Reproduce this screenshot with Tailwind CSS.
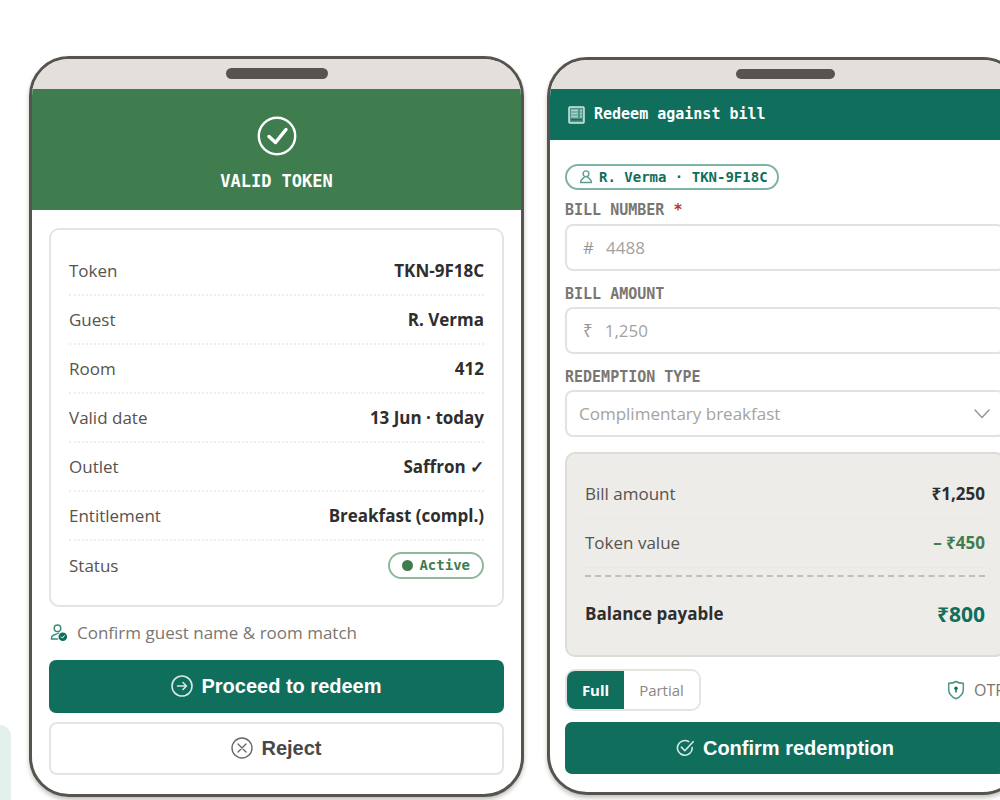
<!DOCTYPE html>
<html lang="en">
<head>
    <meta charset="UTF-8">
    <meta name="viewport" content="width=device-width, initial-scale=1.0">
    <title>Token redemption</title>
    <script src="https://cdn.jsdelivr.net/npm/@tailwindcss/browser@4"></script>
</head>
<body class="bg-white overflow-x-hidden font-['Open_Sans','Noto_Sans',sans-serif] text-[17px] text-[#57534e]">
    <main class="flex items-start min-h-screen overflow-hidden">
        <aside class="w-[11px] h-[75px] shrink-0 self-end rounded-tr-[12px] bg-[#e3f0ec]"></aside>

        <!-- Token check -->
        <section class="w-[49.5%] shrink-0 mt-14 ml-[18px] rounded-[40px] border-3 border-[#57534e] bg-white overflow-hidden shadow-[0_3px_4px_rgba(60,55,45,0.3)]">
            <div class="h-[30px] pt-[9px] bg-[#e3e0db]">
                <div class="w-[102px] h-[11px] mx-auto rounded-full bg-[#57534e]"></div>
            </div>
            <header class="h-[121px] pt-[27px] flex flex-col items-center gap-[13px] bg-[#3f7d4f] text-white">
                <svg class="w-10 h-10" viewBox="0 0 40 40" fill="none" stroke="currentColor" stroke-linecap="round" stroke-linejoin="round">
                    <circle cx="20" cy="20" r="18.2" stroke-width="2.4"/>
                    <path d="M12 20.5l6.500 6L29 13.500" stroke-width="3.500"/>
                </svg>
                <h1 class="font-['DejaVu_Sans_Mono',monospace] font-bold text-[17px] leading-6">VALID TOKEN</h1>
            </header>

            <div class="px-[17px] pt-[18px] pb-[19px]">
                <dl class="rounded-[10px] border-2 border-[#e6e4e1] px-[18px] pt-[17px] pb-[15px]">
                    <div class="h-[49px] flex items-center justify-between border-b-2 border-dotted border-[#efeeea]">
                        <dt>Token</dt>
                        <dd class="font-bold text-[#2e2e2e]">TKN-9F18C</dd>
                    </div>
                    <div class="h-[49px] flex items-center justify-between border-b-2 border-dotted border-[#efeeea]">
                        <dt>Guest</dt>
                        <dd class="font-bold text-[#2e2e2e]">R. Verma</dd>
                    </div>
                    <div class="h-[49px] flex items-center justify-between border-b-2 border-dotted border-[#efeeea]">
                        <dt>Room</dt>
                        <dd class="font-bold text-[#2e2e2e]">412</dd>
                    </div>
                    <div class="h-[49px] flex items-center justify-between border-b-2 border-dotted border-[#efeeea]">
                        <dt>Valid date</dt>
                        <dd class="font-bold text-[#2e2e2e]">13 Jun · today</dd>
                    </div>
                    <div class="h-[49px] flex items-center justify-between border-b-2 border-dotted border-[#efeeea]">
                        <dt>Outlet</dt>
                        <dd class="font-bold text-[#2e2e2e]">Saffron ✓</dd>
                    </div>
                    <div class="h-[49px] flex items-center justify-between border-b-2 border-dotted border-[#efeeea]">
                        <dt>Entitlement</dt>
                        <dd class="font-bold text-[#2e2e2e]">Breakfast (compl.)</dd>
                    </div>
                    <div class="h-[49px] flex items-center justify-between">
                        <dt>Status</dt>
                        <dd class="h-[27px] px-3 flex items-center gap-[6px] rounded-full border-2 border-[#8fb89a] font-['DejaVu_Sans_Mono',monospace] font-bold text-[14px] text-[#3f7d4f]">
                            <span class="w-[11px] h-[11px] rounded-full bg-[#3f7d4f]"></span>Active
                        </dd>
                    </div>
                </dl>

                <p class="flex items-center gap-[9px] h-[26px] mt-[13px] mb-[14px] text-[#7a7672]">
                    <svg class="w-[18px] h-[18px] ml-px" viewBox="0 0 18 18" fill="none" stroke="#3c8b7b" stroke-width="1.500" stroke-linecap="round">
                        <circle cx="7.5" cy="4.2" r="3.300"/>
                        <path d="M7.500 15H1.500c-.3-1.700.3-2.800 1.500-3.600C4.500 10.300 6.500 10.500 8.500 9"/>
                        <circle cx="12.800" cy="12.800" r="4.300" fill="#0f6e5c" stroke="none"/>
                        <path d="M11.200 12.900l1.200 1.200 2-2.500" stroke="#fff" stroke-width="1"/>
                    </svg>
                    Confirm guest name &amp; room match
                </p>

                <button type="button" class="w-full h-[53px] pb-[2px] flex items-center justify-center gap-2 rounded-[7px] bg-[#0f6e5c] text-white font-['Liberation_Sans',Arial,sans-serif] font-bold text-xl">
                    <svg class="w-[22px] h-[22px]" viewBox="0 0 22 22" fill="none" stroke="#d5e8e3" stroke-width="1.600" stroke-linecap="round" stroke-linejoin="round">
                        <circle cx="11" cy="11" r="10"/>
                        <path d="M6.500 11h9M12 7.500l3.500 3.500-3.500 3.500"/>
                    </svg>
                    Proceed to redeem
                </button>
                <button type="button" class="w-full h-[53px] pb-[2px] mt-[9px] flex items-center justify-center gap-2 rounded-[8px] border-2 border-[#e6e4e1] bg-white text-[#4a4846] font-['Liberation_Sans',Arial,sans-serif] font-bold text-xl">
                    <svg class="w-[22px] h-[22px]" viewBox="0 0 22 22" fill="none" stroke="#6b6865" stroke-width="1.400" stroke-linecap="round">
                        <circle cx="11" cy="11" r="10"/>
                        <path d="M7 7l8 8M15 7l-8 8"/>
                    </svg>
                    Reject
                </button>
            </div>
        </section>

        <!-- Bill redemption -->
        <section class="w-[47.6%] shrink-0 mt-[57px] ml-[23px] rounded-[40px] border-3 border-[#57534e] bg-white overflow-hidden shadow-[0_3px_4px_rgba(60,55,45,0.3)]">
            <div class="h-[29px] pt-[9px] bg-[#e3e0db]">
                <div class="w-[99px] h-[10px] mx-auto rounded-full bg-[#57534e]"></div>
            </div>
            <header class="h-[51px] px-[18px] flex items-center gap-[9px] bg-[#0f6e5c] text-white">
                <svg class="w-[17px] h-[18px]" viewBox="0 0 17 18" fill="none" stroke="#d5e8e3" stroke-width="1.500">
                    <rect x="1" y="1" width="15" height="16" rx="1" fill="#4d9586"/>
                    <path d="M3 4.500h7M3 7.500h7M3 10.500h7M12 4.500h2M12 7.500h2M12 10.500h2" stroke="#a9cfc6" stroke-width="1.800"/>
                    <path d="M3 13.800h11" stroke="#0f6e5c"/>
                </svg>
                <h2 class="font-['DejaVu_Sans_Mono',monospace] font-bold text-[15px]">Redeem against bill</h2>
            </header>

            <form class="px-[15px] pt-6 pb-[18px]">
                <div class="inline-flex items-center gap-[6px] h-[26px] pl-3 pr-[9px] rounded-full border-2 border-[#7fb3a7] align-top font-['DejaVu_Sans_Mono',monospace] font-bold text-[14px] text-[#0f6e5c]">
                    <svg class="w-[14px] h-[14px]" viewBox="0 0 14 14" fill="none" stroke="#5d9e90" stroke-width="1.400" stroke-linejoin="round">
                        <circle cx="7" cy="3.800" r="2.900"/>
                        <path d="M5.500 6.500c0 2-4 1.800-4 6h11c0-4.200-4-4-4-6"/>
                    </svg>
                    R. Verma · TKN-9F18C
                </div>

                <label for="bill-number" class="block mt-[10px] mb-1 font-['DejaVu_Sans_Mono',monospace] font-bold text-[15px] leading-5 text-[#7a7672]">BILL NUMBER <span class="text-[#b03a2e]">*</span></label>
                <div class="h-[47px] px-4 flex items-center gap-3 rounded-[8px] border-2 border-[#e3e2df] text-[#9a9794]">
                    <span>#</span>
                    <input id="bill-number" type="text" placeholder="4488" class="flex-1 min-w-0 outline-none placeholder:text-[#a5a3a0]">
                </div>

                <label for="bill-amount" class="block mt-[13px] mb-[3px] font-['DejaVu_Sans_Mono',monospace] font-bold text-[15px] leading-5 text-[#7a7672]">BILL AMOUNT</label>
                <div class="h-[47px] px-4 flex items-center gap-3 rounded-[8px] border-2 border-[#e3e2df] text-[#9a9794]">
                    <span>₹</span>
                    <input id="bill-amount" type="text" placeholder="1,250" class="flex-1 min-w-0 outline-none placeholder:text-[#a5a3a0]">
                </div>

                <label for="redemption-type" class="block mt-[13px] mb-[3px] font-['DejaVu_Sans_Mono',monospace] font-bold text-[15px] leading-5 text-[#7a7672]">REDEMPTION TYPE</label>
                <div class="grid items-center">
                    <select id="redemption-type" class="col-start-1 row-start-1 w-full h-[47px] px-3 appearance-none rounded-[8px] border-2 border-[#e3e2df] bg-white text-[#a5a3a0]">
                        <option>Complimentary breakfast</option>
                    </select>
                    <svg class="col-start-1 row-start-1 justify-self-end mr-[15px] w-4 h-[10px] pointer-events-none" viewBox="0 0 16 10" fill="none" stroke="#9a9794" stroke-width="1.500" stroke-linecap="round" stroke-linejoin="round">
                        <path d="M1 1l7 7.500L15 1"/>
                    </svg>
                </div>

                <dl class="h-[205px] mt-[15px] px-[18px] py-4 rounded-[10px] border-2 border-[#dedcd7] bg-[#edece8]">
                    <div class="h-[49px] flex items-center justify-between border-b border-[#e9e8e4]">
                        <dt>Bill amount</dt>
                        <dd class="font-bold text-[#2e2e2e]">₹1,250</dd>
                    </div>
                    <div class="h-[49px] flex items-center justify-between border-b border-[#e9e8e4]">
                        <dt>Token value</dt>
                        <dd class="font-bold text-[#3f7d4f]">– ₹450</dd>
                    </div>
                    <div class="mt-[7px] pt-[23px] flex items-center justify-between border-t-2 border-dashed border-[#c2bfba] font-bold leading-7">
                        <dt class="text-[#2e2e2e]">Balance payable</dt>
                        <dd class="text-[21px] leading-7 text-[#0f6e5c]">₹800</dd>
                    </div>
                </dl>

                <div class="mt-3 flex items-center justify-between">
                    <div class="flex h-[42px] rounded-[10px] border-2 border-[#e6e4e1] overflow-hidden text-[15px]">
                        <button type="button" class="w-[57px] bg-[#0f6e5c] text-white font-bold">Full</button>
                        <button type="button" class="w-[75px] bg-white text-[#8a8783]">Partial</button>
                    </div>
                    <span class="flex items-center gap-[9px] text-base text-[#7a7672]">
                        <svg class="w-[18px] h-5" viewBox="0 0 18 20" fill="none" stroke="#4d9586" stroke-width="1.500" stroke-linejoin="round">
                            <path d="M9 1.500c2 1.300 4.500 1.800 7.300 1.800v6.200c0 4.200-2.600 7.200-7.300 9.200-4.700-2-7.300-5-7.300-9.200V3.300C4.500 3.300 7 2.800 9 1.500z"/>
                            <circle cx="9" cy="8.200" r="1.700" fill="#0f6e5c" stroke="none"/>
                            <path d="M9 8.500v4" stroke="#0f6e5c"/>
                        </svg>
                        OTP
                    </span>
                </div>

                <button type="button" class="w-full h-[52px] mt-[11px] flex items-center justify-center gap-[9px] rounded-[7px] bg-[#0f6e5c] text-white font-['Liberation_Sans',Arial,sans-serif] font-bold text-xl">
                    <svg class="w-[18px] h-[18px]" viewBox="0 0 20 20" fill="none" stroke="#d5e8e3" stroke-width="1.800" stroke-linecap="round" stroke-linejoin="round">
                        <path d="M18 9.500A8.200 8.200 0 1 1 14 2.800"/>
                        <path d="M6 9l3.800 4L19 3"/>
                    </svg>
                    Confirm redemption
                </button>
            </form>
        </section>
    </main>
</body>
</html>
